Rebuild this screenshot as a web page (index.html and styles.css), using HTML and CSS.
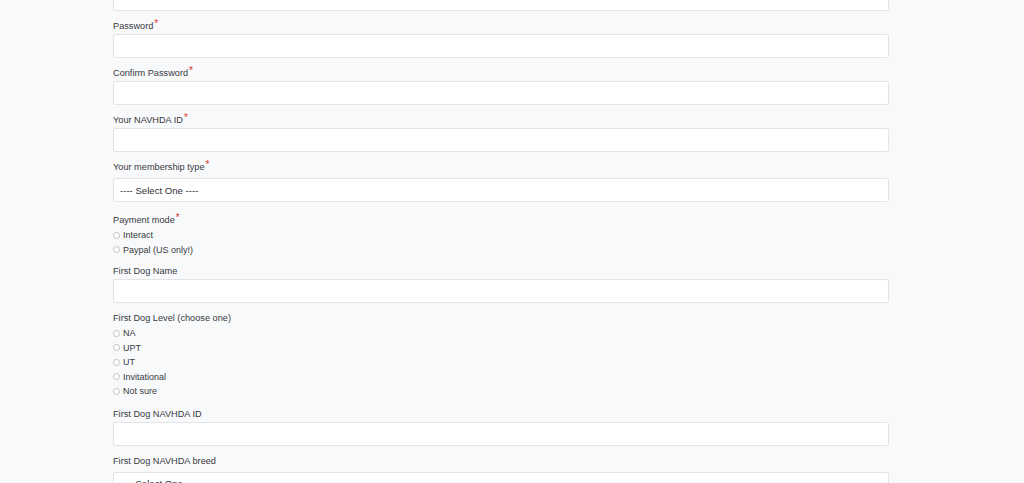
FILE: index.html
```html
<!DOCTYPE html>
<html lang="en">
<head>
<meta charset="utf-8">
<title>Registration</title>
<link rel="stylesheet" href="styles.css">
</head>
<body>
<form class="form">
  <div class="field">
    <input class="input" type="text">
  </div>
  <div class="field">
    <label class="label">Password<span class="req">*</span></label>
    <input class="input" type="password">
  </div>
  <div class="field">
    <label class="label">Confirm Password<span class="req">*</span></label>
    <input class="input" type="password">
  </div>
  <div class="field">
    <label class="label">Your NAVHDA ID<span class="req">*</span></label>
    <input class="input" type="text">
  </div>
  <div class="field field-select">
    <label class="label label-select">Your membership type<span class="req">*</span></label>
    <div class="select">---- Select One ----</div>
  </div>
  <div class="field field-radios field-pay">
    <label class="label">Payment mode<span class="req">*</span></label>
    <div class="radios">
      <label class="radio"><input type="radio" name="pay"><span>Interact</span></label>
      <label class="radio"><input type="radio" name="pay"><span>Paypal (US only!)</span></label>
    </div>
  </div>
  <div class="field">
    <label class="label">First Dog Name</label>
    <input class="input" type="text">
  </div>
  <div class="field field-radios">
    <label class="label">First Dog Level (choose one)</label>
    <div class="radios">
      <label class="radio"><input type="radio" name="lvl"><span>NA</span></label>
      <label class="radio"><input type="radio" name="lvl"><span>UPT</span></label>
      <label class="radio"><input type="radio" name="lvl"><span>UT</span></label>
      <label class="radio"><input type="radio" name="lvl"><span>Invitational</span></label>
      <label class="radio"><input type="radio" name="lvl"><span>Not sure</span></label>
    </div>
  </div>
  <div class="field">
    <label class="label">First Dog NAVHDA ID</label>
    <input class="input" type="text">
  </div>
  <div class="field field-select">
    <label class="label label-select">First Dog NAVHDA breed</label>
    <div class="select">---- Select One ----</div>
  </div>
</form>
</body>
</html>
```

FILE: styles.css
```css
html, body {
  margin: 0;
  padding: 0;
  background: #f8f9fb;
  overflow: hidden;
}

body {
  font-family: "Liberation Sans", Arial, sans-serif;
  font-size: 9.2px;
  color: #383a3e;
}

.form {
  width: 776px;
  margin: -13px 0 0 113px;
  display: flex;
  flex-direction: column;
}

.field {
  display: flex;
  flex-direction: column;
  margin-bottom: 9px;
}

.field-select {
  margin-bottom: 12px;
}

.field-radios {
  margin-bottom: 9px;
}

.field-pay {
  margin-bottom: 8px;
}

.label {
  display: block;
  line-height: 13px;
  height: 12px;
  margin-bottom: 2px;
  white-space: nowrap;
}

.label-select {
  margin-bottom: 5px;
}

.req {
  color: #e0362c;
  font-size: 10px;
  line-height: 8px;
  vertical-align: top;
  margin-left: 1px;
}

.input,
.select {
  box-sizing: border-box;
  width: 100%;
  height: 24px;
  margin: 0;
  background: #ffffff;
  border: 1px solid #e3e4e6;
  border-radius: 2px;
  font-family: inherit;
  font-size: 9px;
  color: #333;
  outline: none;
}

.select {
  display: flex;
  align-items: center;
  padding: 0 6px;
  font-size: 9.6px;
  color: #2f3134;
}

.radios {
  display: flex;
  flex-direction: column;
}

.radio {
  display: flex;
  align-items: center;
  height: 14.5px;
  line-height: 14.5px;
  font-size: 9px;
}

.radio input {
  appearance: none;
  -webkit-appearance: none;
  box-sizing: border-box;
  flex: none;
  width: 7px;
  height: 7px;
  margin: 0 3px 0 0;
  border: 1px solid #bfc1c4;
  border-radius: 50%;
  background: #fff;
}
```
